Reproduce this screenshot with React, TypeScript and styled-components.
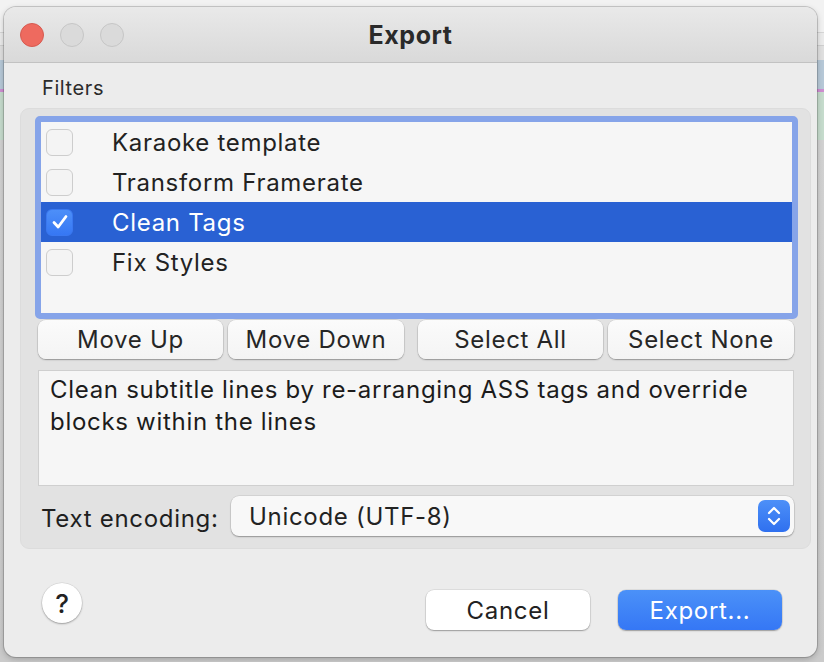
import styled, { createGlobalStyle } from "styled-components";

const GlobalStyle = createGlobalStyle`
  html,
  body {
    margin: 0;
    padding: 0;
  }

  body {
    font-family: Inter, "Noto Sans", "Liberation Sans", sans-serif;
    color: #232323;
  }
`;

const Desktop = styled.div`
  width: 824px;
  height: 662px;
  box-sizing: border-box;
  padding: 7px 7px 5px 4px;
  overflow: hidden;
  background: linear-gradient(
    to bottom,
    #f2f2f2 0px,
    #f2f2f2 32px,
    #d6d6d6 32px,
    #d6d6d6 33px,
    #ebebeb 33px,
    #ebebeb 45px,
    #cfcfcf 45px,
    #cfcfcf 46px,
    #e0e0e0 46px,
    #e0e0e0 60px,
    #b7c9d8 60px,
    #b7c9d8 89px,
    #cf8fd2 89px,
    #cf8fd2 92px,
    #c6dccd 92px,
    #c6dccd 140px,
    #d2d2d2 140px,
    #cbcbcb 662px
  );
`;

const Window = styled.div`
  width: 813px;
  height: 650px;
  display: flex;
  flex-direction: column;
  background: #ececec;
  border-radius: 12px;
  overflow: hidden;
  box-shadow: 0 0 0 1px rgba(0, 0, 0, 0.16), 0 2px 6px rgba(0, 0, 0, 0.22);
`;

const TitleBar = styled.div`
  flex: none;
  height: 55px;
  display: grid;
  grid-template-columns: 1fr auto 1fr;
  align-items: center;
  padding: 0 16px;
  background: linear-gradient(to bottom, #e9e9e9, #d9d9d9);
  border-bottom: 1px solid #c2c2c2;
`;

const Lights = styled.div`
  display: flex;
  gap: 16px;
`;

const Light = styled.span<{ $color: string; $edge: string }>`
  width: 24px;
  height: 24px;
  box-sizing: border-box;
  border-radius: 50%;
  background: ${(p) => p.$color};
  border: 1px solid ${(p) => p.$edge};
`;

const Title = styled.div`
  font-size: 25px;
  font-weight: 700;
  letter-spacing: 0.6px;
  color: #2a2a2a;
`;

const Body = styled.div`
  flex: 1;
  display: flex;
  flex-direction: column;
  padding: 0 6px 0 16px;
  font-size: 24px;
  letter-spacing: 0.7px;
`;

const SectionLabel = styled.div`
  margin: 13px 0 8px 22px;
  font-size: 20px;
  letter-spacing: 0.6px;
  line-height: 24px;
  color: #2b2b2b;
`;

const Group = styled.div`
  height: 441px;
  box-sizing: border-box;
  display: flex;
  flex-direction: column;
  padding: 7px 12px 12px 14px;
  background: #e2e2e2;
  border: 1px solid #dcdcdc;
  border-radius: 9px;
`;

const List = styled.div`
  height: 203px;
  flex: none;
  box-sizing: border-box;
  border: 6px solid #86a4e9;
  border-radius: 5px;
  background: #f6f6f6;
  overflow: hidden;
`;

const Row = styled.div<{ $selected?: boolean }>`
  height: 40px;
  display: flex;
  align-items: center;
  gap: 39px;
  padding-left: 5px;
  color: ${(p) => (p.$selected ? "#ffffff" : "#222222")};
  background: ${(p) => (p.$selected ? "#2961d3" : "transparent")};
`;

const Check = styled.span<{ $checked?: boolean }>`
  width: 27px;
  height: 27px;
  box-sizing: border-box;
  flex: none;
  display: flex;
  align-items: center;
  justify-content: center;
  border-radius: 6px;
  background: ${(p) => (p.$checked ? "linear-gradient(#4d8ff8, #3677f4)" : "#f4f4f4")};
  border: 1px solid ${(p) => (p.$checked ? "#3a78f0" : "#cdcdcd")};
`;

const ButtonRow = styled.div`
  display: flex;
  justify-content: space-between;
  margin: 1px 4px 0 3px;
  height: 40px;
`;

const ButtonPair = styled.div`
  display: flex;
  gap: 5px;
`;

const PushButton = styled.button<{ $width: number }>`
  width: ${(p) => p.$width}px;
  height: 39px;
  border: none;
  border-radius: 8px;
  background: linear-gradient(to bottom, #fbfbfb, #f4f4f4);
  box-shadow: 0 0 0 0.5px rgba(0, 0, 0, 0.12), 0 1px 1.5px rgba(0, 0, 0, 0.3);
  font-family: inherit;
  font-size: inherit;
  letter-spacing: inherit;
  color: #262626;
  padding: 0;
`;

const Description = styled.div`
  height: 116px;
  box-sizing: border-box;
  margin: 10px 4px 0 3px;
  padding: 3px 11px;
  border: 1px solid #cfcfcf;
  background: #f6f6f6;
  line-height: 32px;
  color: #1c1c1c;
`;

const EncodingRow = styled.div`
  display: flex;
  align-items: center;
  height: 40px;
  margin: 10px 4px 0 3px;
`;

const EncodingLabel = styled.span`
  width: 193px;
  box-sizing: border-box;
  padding-left: 3px;
  padding-top: 4px;
  color: #1f1f1f;
`;

const Popup = styled.div`
  flex: 1;
  height: 40px;
  display: flex;
  align-items: center;
  justify-content: space-between;
  padding: 0 4px 0 18px;
  border-radius: 8px;
  background: #f8f8f8;
  box-shadow: 0 0 0 0.5px rgba(0, 0, 0, 0.12), 0 1px 1.5px rgba(0, 0, 0, 0.3);
  color: #232323;
`;

const Stepper = styled.span`
  width: 32px;
  height: 32px;
  display: flex;
  align-items: center;
  justify-content: center;
  border-radius: 7px;
  background: linear-gradient(to bottom, #4d90f8, #2f70ef);
`;

const Footer = styled.div`
  display: flex;
  align-items: flex-start;
  padding: 34px 29px 0 22px;
`;

const HelpButton = styled.button`
  width: 40px;
  height: 40px;
  border: none;
  border-radius: 50%;
  background: #ffffff;
  box-shadow: 0 0 0 0.5px rgba(0, 0, 0, 0.1), 0 1px 2px rgba(0, 0, 0, 0.3);
  font-family: inherit;
  font-size: 26px;
  font-weight: 500;
  color: #222222;
  padding: 0;
`;

const Actions = styled.div`
  margin-left: auto;
  margin-top: 7px;
  display: flex;
  gap: 28px;
`;

const DialogButton = styled.button<{ $primary?: boolean }>`
  width: 164px;
  height: 40px;
  border: none;
  border-radius: 8px;
  padding: 0;
  font-family: inherit;
  font-size: inherit;
  letter-spacing: inherit;
  color: ${(p) => (p.$primary ? "#ffffff" : "#222222")};
  background: ${(p) => (p.$primary ? "linear-gradient(to bottom, #4b91f8, #3577f5)" : "#ffffff")};
  box-shadow: 0 0 0 0.5px rgba(0, 0, 0, 0.12), 0 1px 1.5px rgba(0, 0, 0, 0.3);
`;

const filters = [
  { name: "Karaoke template", checked: false },
  { name: "Transform Framerate", checked: false },
  { name: "Clean Tags", checked: true },
  { name: "Fix Styles", checked: false },
];

const App = () => {
  return (
    <>
      <GlobalStyle />
      <Desktop>
        <Window>
          <TitleBar>
            <Lights>
              <Light $color="#ee6a5f" $edge="#d65a50" />
              <Light $color="#dadada" $edge="#c6c6c6" />
              <Light $color="#dadada" $edge="#c6c6c6" />
            </Lights>
            <Title>Export</Title>
            <span />
          </TitleBar>
          <Body>
            <SectionLabel>Filters</SectionLabel>
            <Group>
              <List>
                {filters.map((f) => (
                  <Row key={f.name} $selected={f.checked}>
                    <Check $checked={f.checked}>
                      {f.checked && (
                        <svg width="20" height="20" viewBox="0 0 20 20">
                          <path
                            d="M4 10.5 L8.2 15 L16 4.5"
                            fill="none"
                            stroke="#ffffff"
                            strokeWidth="2.8"
                            strokeLinecap="round"
                            strokeLinejoin="round"
                          />
                        </svg>
                      )}
                    </Check>
                    {f.name}
                  </Row>
                ))}
              </List>
              <ButtonRow>
                <ButtonPair>
                  <PushButton $width={185}>Move Up</PushButton>
                  <PushButton $width={176}>Move Down</PushButton>
                </ButtonPair>
                <ButtonPair>
                  <PushButton $width={185}>Select All</PushButton>
                  <PushButton $width={186}>Select None</PushButton>
                </ButtonPair>
              </ButtonRow>
              <Description>
                Clean subtitle lines by re-arranging ASS tags and override blocks within the lines
              </Description>
              <EncodingRow>
                <EncodingLabel>Text encoding:</EncodingLabel>
                <Popup>
                  Unicode (UTF-8)
                  <Stepper>
                    <svg width="20" height="24" viewBox="0 0 20 24">
                      <path
                        d="M5 9 L10 4 L15 9 M5 15 L10 20 L15 15"
                        fill="none"
                        stroke="#ffffff"
                        strokeWidth="2.2"
                        strokeLinecap="round"
                        strokeLinejoin="round"
                      />
                    </svg>
                  </Stepper>
                </Popup>
              </EncodingRow>
            </Group>
            <Footer>
              <HelpButton>?</HelpButton>
              <Actions>
                <DialogButton>Cancel</DialogButton>
                <DialogButton $primary>Export...</DialogButton>
              </Actions>
            </Footer>
          </Body>
        </Window>
      </Desktop>
    </>
  );
};

export default App;
